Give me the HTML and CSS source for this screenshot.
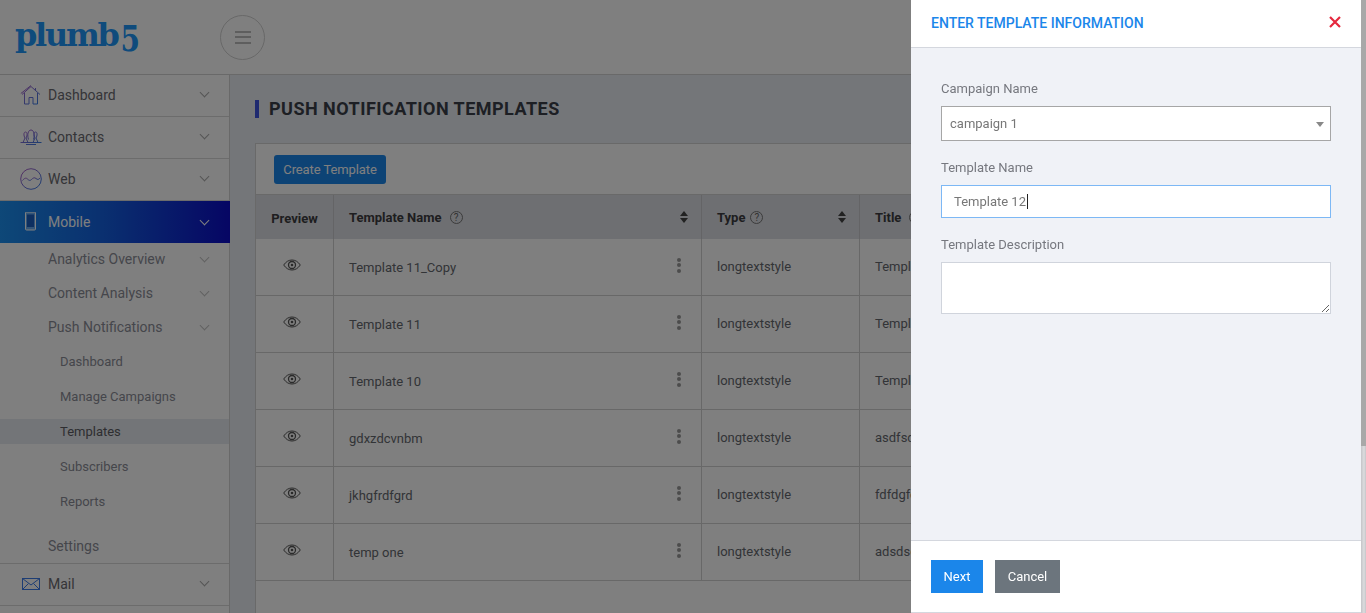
FILE: index.html
```html
<!DOCTYPE html>
<html lang="en">
<head>
  <meta charset="UTF-8">
  <title>Push Notification Templates</title>
  <link rel="stylesheet" href="styles.css">
</head>
<body>
  <svg class="defs" width="0" height="0">
    <defs>
      <linearGradient id="iconGrad" x1="0" y1="0" x2="1" y2="1">
        <stop offset="0" stop-color="#b85fc4"/>
        <stop offset="1" stop-color="#2f7fe8"/>
      </linearGradient>
      <symbol id="eye" viewBox="0 0 18 12">
        <path d="M.7 6C3 2.600 5.800 1 9 1s6 1.600 8.300 5C15 9.400 12.200 11 9 11S3 9.400.7 6z" fill="none" stroke="#555" stroke-width="1"/>
        <circle cx="9" cy="6" r="3.500" fill="none" stroke="#555" stroke-width="1.300"/>
        <circle cx="9" cy="6" r="1.300" fill="#555"/>
      </symbol>
    </defs>
  </svg>

  <header class="topbar">
    <div class="logo">plumb<span class="logo-five">5</span></div>
    <button class="menu-btn"><span></span><span></span><span></span></button>
  </header>

  <div class="layout">
    <aside class="sidebar">
      <div class="nav-item">
        <svg class="nav-icon" viewBox="0 0 22 20" fill="none" stroke="url(#iconGrad)" stroke-width="1">
          <path d="M2 9.500 11 1.500l9 8M4.500 8v11h4.500v-6.500h4V19h4.500V8M15.500 3v2.500M.8 8.500 11 .5"/>
        </svg>
        <span class="nav-label">Dashboard</span><i class="chevron"></i>
      </div>
      <div class="nav-item">
        <svg class="nav-icon" viewBox="0 0 22 16" fill="none" stroke="url(#iconGrad)" stroke-width="1">
          <path d="M.5 13.500h21M3 13.500 5 9C3.500 6.500 3.500 3 5.500 3S7.500 6.500 6 9l2 4.500M8.500 10.500C7 6 8 1 11 1s4 5 2.500 9.500M13 13.500l2-4.500c-1.500-2.500-1.500-6 .5-6s2 3.500.5 6l2 4.500M6 15.500h10"/>
        </svg>
        <span class="nav-label">Contacts</span><i class="chevron"></i>
      </div>
      <div class="nav-item">
        <svg class="nav-icon icon-tall" viewBox="0 0 22 22" fill="none" stroke="url(#iconGrad)" stroke-width="1">
          <circle cx="11" cy="11" r="10.300"/>
          <path d="M2.500 12.500c2-2.500 3.500-3 5-1.500s2.500 2 4 .5 3-2.500 4.500-1 3 1 4-.5"/>
        </svg>
        <span class="nav-label">Web</span><i class="chevron"></i>
      </div>
      <div class="nav-item nav-active">
        <svg class="nav-icon" viewBox="0 0 22 20" fill="none" stroke="#fff" stroke-width="1">
          <rect x="5.500" y="0" width="10" height="18" rx="1" fill="#fff" fill-opacity=".35"/>
          <rect x="7" y="2.500" width="7" height="12.500" fill="#1a5fc0" stroke="none"/>
        </svg>
        <span class="nav-label">Mobile</span><i class="chevron"></i>
      </div>
      <div class="sub-item"><span class="nav-label">Analytics Overview</span><i class="chevron"></i></div>
      <div class="sub-item"><span class="nav-label">Content Analysis</span><i class="chevron"></i></div>
      <div class="sub-item"><span class="nav-label">Push Notifications</span><i class="chevron"></i></div>
      <ul class="sub-list">
        <li>Dashboard</li>
        <li>Manage Campaigns</li>
        <li class="current">Templates</li>
        <li>Subscribers</li>
        <li>Reports</li>
      </ul>
      <div class="sub-item sub-last"><span class="nav-label">Settings</span></div>
      <div class="nav-item">
        <svg class="nav-icon" viewBox="0 0 22 14" fill="none" stroke="#3a7be8" stroke-width="1">
          <rect x="2.500" y="1.500" width="17" height="11"/>
          <path d="M2.500 1.500 11 8l8.500-6.500M2.500 12.500 8.500 6.500M19.500 12.500l-6-6"/>
        </svg>
        <span class="nav-label">Mail</span><i class="chevron"></i>
      </div>
    </aside>

    <main class="content">
      <h1 class="page-title">PUSH NOTIFICATION TEMPLATES</h1>
      <section class="card">
        <div class="toolbar"><button class="btn-create">Create Template</button></div>
        <table class="grid">
          <colgroup>
            <col class="col-preview"><col class="col-name"><col class="col-type"><col class="col-title">
          </colgroup>
          <thead>
            <tr>
              <th class="center">Preview</th>
              <th><div class="th-in">Template Name <i class="help">?</i><b class="sort"></b></div></th>
              <th><div class="th-in">Type <i class="help">?</i><b class="sort"></b></div></th>
              <th><div class="th-in">Title <i class="help">?</i><b class="sort"></b></div></th>
            </tr>
          </thead>
          <tbody>
            <tr>
              <td class="center"><svg class="eye"><use href="#eye"/></svg></td>
              <td><div class="td-in">Template 11_Copy<span class="kebab"><i></i><i></i><i></i></span></div></td>
              <td>longtextstyle</td><td>Template 11</td>
            </tr>
            <tr>
              <td class="center"><svg class="eye"><use href="#eye"/></svg></td>
              <td><div class="td-in">Template 11<span class="kebab"><i></i><i></i><i></i></span></div></td>
              <td>longtextstyle</td><td>Template 11</td>
            </tr>
            <tr>
              <td class="center"><svg class="eye"><use href="#eye"/></svg></td>
              <td><div class="td-in">Template 10<span class="kebab"><i></i><i></i><i></i></span></div></td>
              <td>longtextstyle</td><td>Template 10</td>
            </tr>
            <tr>
              <td class="center"><svg class="eye"><use href="#eye"/></svg></td>
              <td><div class="td-in">gdxzdcvnbm<span class="kebab"><i></i><i></i><i></i></span></div></td>
              <td>longtextstyle</td><td>asdfsdfg</td>
            </tr>
            <tr>
              <td class="center"><svg class="eye"><use href="#eye"/></svg></td>
              <td><div class="td-in">jkhgfrdfgrd<span class="kebab"><i></i><i></i><i></i></span></div></td>
              <td>longtextstyle</td><td>fdfdgfdg</td>
            </tr>
            <tr>
              <td class="center"><svg class="eye"><use href="#eye"/></svg></td>
              <td><div class="td-in">temp one<span class="kebab"><i></i><i></i><i></i></span></div></td>
              <td>longtextstyle</td><td>adsdsd</td>
            </tr>
          </tbody>
        </table>
      </section>
    </main>
  </div>

  <div class="overlay"></div>

  <aside class="drawer">
    <div class="drawer-main">
      <div class="drawer-head">
        <h2>ENTER TEMPLATE INFORMATION</h2>
        <svg class="close" viewBox="0 0 12 12" stroke="#e5283e" stroke-width="2.200">
          <path d="M1 1l10 10M11 1 1 11"/>
        </svg>
      </div>
      <form class="drawer-body">
        <label class="field-label">Campaign Name</label>
        <div class="select-wrap">
          <select class="field-select"><option>campaign 1</option></select>
        </div>
        <label class="field-label">Template Name</label>
        <div class="field-input">Template 12<span class="caret"></span></div>
        <label class="field-label">Template Description</label>
        <textarea class="field-area"></textarea>
      </form>
      <div class="drawer-foot">
        <button class="btn btn-next">Next</button>
        <button class="btn btn-cancel">Cancel</button>
      </div>
    </div>
    <div class="scroll-strip"><div class="scroll-thumb"></div></div>
  </aside>
</body>
</html>
```

FILE: styles.css
```css
* {
  box-sizing: border-box;
}
html, body {
  height: 100%;
}
body {
  margin: 0;
  font-family: Roboto, "Liberation Sans", sans-serif;
  font-size: 13px;
  color: #65686e;
  background: #e9ecf3;
  overflow: hidden;
}
.defs {
  position: absolute;
}

/* top bar */
.topbar {
  display: flex;
  align-items: center;
  height: 75px;
  background: #fff;
  border-bottom: 1px solid #d2d2d2;
}
.logo {
  width: 220px;
  padding-left: 15px;
  margin-top: -2px;
  font-family: "DejaVu Serif", serif;
  font-weight: bold;
  font-size: 32px;
  letter-spacing: -2.300px;
  color: #1e96f8;
}
.logo-five {
  display: inline-block;
  margin-left: 3px;
  font-size: 28px;
  letter-spacing: 0;
  vertical-align: -3px;
  transform: scaleY(1.25);
}
.menu-btn {
  display: flex;
  flex-direction: column;
  align-items: center;
  justify-content: center;
  gap: 3.500px;
  width: 45px;
  height: 45px;
  padding: 0;
  background: #fff;
  border: 1px solid #d0d0d0;
  border-radius: 50%;
}
.menu-btn span {
  display: block;
  width: 16px;
  height: 2px;
  background: #bcbcbc;
}

/* sidebar */
.layout {
  display: flex;
  height: calc(100% - 75px);
}
.sidebar {
  flex: none;
  width: 230px;
  background: #fff;
  border-right: 1px solid #d2d2d2;
}
.nav-item {
  display: flex;
  align-items: center;
  height: 42px;
  padding: 0 21px 2px 20px;
  font-size: 14px;
  color: #6a6a70;
  border-bottom: 1px solid #d8d8d8;
}
.nav-icon {
  flex: none;
  width: 22px;
  height: 20px;
  margin-right: 6px;
}
.icon-tall {
  height: 22px;
}
.nav-label {
  flex: 1;
}
.chevron {
  width: 7px;
  height: 7px;
  margin-top: -4px;
  border-right: 1px solid #aaa;
  border-bottom: 1px solid #aaa;
  transform: rotate(45deg);
}
.nav-active {
  height: 42px;
  margin-right: -1px;
  padding: 0 22px 0 20px;
  color: #fff;
  border-bottom: 0;
  background: linear-gradient(90deg, #1c90f0, #1460e0 45%, #0c0cc8);
}
.nav-active .chevron {
  border-color: #fff;
}
.sub-item {
  display: flex;
  align-items: center;
  height: 34px;
  padding: 0 21px 0 48px;
  font-size: 14px;
  color: #8b8d97;
}
.nav-active + .sub-item {
  margin-top: -1px;
}
.sub-item .chevron {
  border-color: #c4c4c4;
}
.sub-last {
  height: 35px;
  border-bottom: 1px solid #d8d8d8;
}
.sub-list {
  margin: 5px 0 15px;
  padding: 0;
  list-style: none;
  font-size: 13px;
  color: #8b8d97;
}
.sub-list li {
  height: 25px;
  padding-left: 60px;
  margin-bottom: 10px;
  line-height: 25px;
}
.sub-list li:last-child {
  margin-bottom: 0;
}
.sub-list .current {
  color: #5c5d63;
  background: #e6eaf0;
}

/* main area */
.content {
  flex: 1;
  min-width: 0;
  padding: 25px 25px 0;
  overflow: hidden;
}
.page-title {
  margin: 0 0 25px;
  height: 18px;
  padding-left: 10px;
  border-left: 4px solid #3f55e0;
  font-size: 18px;
  line-height: 18px;
  font-weight: 700;
  letter-spacing: .47px;
  color: #3a3f48;
}
.card {
  height: 500px;
  background: #fff;
  border: 1px solid #d2d2d2;
}
.toolbar {
  height: 51px;
  padding: 11px 18px 0;
  border-bottom: 1px solid #d2d2d2;
}
.btn-create {
  display: block;
  height: 29px;
  width: 112px;
  padding: 0;
  font: 13px Roboto, sans-serif;
  letter-spacing: -.1px;
  color: #fff;
  background: #1b86ea;
  border: 0;
  border-radius: 3px;
}
.grid {
  width: 100%;
  table-layout: fixed;
  border-collapse: separate;
  border-spacing: 0;
}
.col-preview {
  width: 78px;
}
.col-name {
  width: 368px;
}
.col-type {
  width: 158px;
}
.grid th {
  height: 44px;
  padding: 0 12px 0 15px;
  text-align: left;
  font-size: 13px;
  font-weight: 700;
  color: #3c3c40;
  background: #dcdee4;
  border-right: 1px solid #c8c9cd;
}
.grid td {
  height: 57px;
  padding: 0 15px 2px;
  border-right: 1px solid #d0d0d0;
  border-bottom: 1px solid #d0d0d0;
}
.grid th.center {
  padding: 2px 0 0;
  text-align: center;
}
.grid td.center {
  padding: 0;
}
.th-in, .td-in {
  display: flex;
  align-items: center;
}
.td-in {
  padding-top: 2px;
}
.help {
  display: inline-block;
  width: 13px;
  height: 13px;
  margin-left: 8px;
  font: 10px/11px Roboto, sans-serif;
  text-align: center;
  color: #666;
  border: 1px solid #777;
  border-radius: 50%;
}
th:nth-child(3) .help {
  margin-left: 5px;
}
.sort {
  margin-left: auto;
  position: relative;
  width: 9px;
  height: 12px;
}
.sort::before, .sort::after {
  content: "";
  position: absolute;
  left: 0;
  border-left: 4.500px solid transparent;
  border-right: 4.500px solid transparent;
}
.sort::before {
  top: 0;
  border-bottom: 5px solid #444;
}
.sort::after {
  bottom: 0;
  border-top: 5px solid #444;
}
.eye {
  display: block;
  width: 18px;
  height: 12px;
  margin: -4px 0 0 27px;
}
.kebab {
  display: flex;
  flex-direction: column;
  gap: 1.500px;
  margin: -4px 5px 0 auto;
}
.kebab i {
  display: block;
  width: 4px;
  height: 4px;
  background: #999;
  border-radius: 50%;
}

/* dim layer and right drawer */
.overlay {
  position: fixed;
  inset: 0;
  background: rgba(0, 0, 0, .5);
}
.drawer {
  position: fixed;
  top: 0;
  right: 0;
  bottom: 0;
  display: flex;
  width: 455px;
}
.drawer-main {
  display: flex;
  flex-direction: column;
  flex: 1;
  background: #f0f2f7;
}
.drawer-head {
  display: flex;
  align-items: center;
  justify-content: space-between;
  height: 48px;
  padding: 0 20px 2px;
  background: #fff;
  border-bottom: 1px solid #d4d7de;
}
.drawer-head h2 {
  margin: 0;
  font-size: 14px;
  font-weight: 500;
  color: #1b86ea;
}
.close {
  width: 12px;
  height: 12px;
  margin-top: -1px;
}
.drawer-body {
  flex: 1;
  padding: 31px 30px 0;
}
.field-label {
  display: block;
  height: 18px;
  margin-bottom: 9px;
  line-height: 20px;
  font-size: 13px;
  color: #76787f;
}
.select-wrap {
  position: relative;
  margin-bottom: 17px;
}
.select-wrap::after {
  content: "";
  position: absolute;
  top: 16px;
  right: 7px;
  border-left: 4px solid transparent;
  border-right: 4px solid transparent;
  border-top: 5px solid #888;
}
.field-select {
  display: block;
  width: 100%;
  height: 35px;
  padding: 0 8px;
  font: 13px Roboto, sans-serif;
  color: #777;
  background: #fff;
  border: 1px solid #a6a6a6;
  border-radius: 0;
  appearance: none;
}
.field-input {
  display: flex;
  align-items: center;
  height: 33px;
  margin-bottom: 17px;
  padding-left: 12px;
  color: #777;
  background: #fff;
  border: 1px solid #7db8f5;
}
.caret {
  width: 1px;
  height: 15px;
  margin-left: 1px;
  background: #222;
}
.field-area {
  display: block;
  width: 100%;
  height: 52px;
  background: #fff;
  border: 1px solid #d0d4dc;
  border-radius: 0;
  outline: 0;
}
.drawer-foot {
  display: flex;
  gap: 12px;
  height: 73px;
  padding: 19px 20px 0;
  background: #fff;
  border-top: 1px solid #d4d7de;
  border-bottom: 1px solid #d4d7de;
}
.btn {
  height: 33px;
  padding: 0;
  font: 400 13px Roboto, sans-serif;
  color: #fff;
  border: 0;
}
.btn-next {
  width: 52px;
  background: #1b86ea;
}
.btn-cancel {
  width: 65px;
  background: #6c757d;
}
.scroll-strip {
  flex: none;
  width: 5px;
  background: linear-gradient(90deg, #c4c4c8, #dcdcde 60%, #c4c4c8);
}
.scroll-thumb {
  height: 446px;
  background: #a8a8a8;
}
```
